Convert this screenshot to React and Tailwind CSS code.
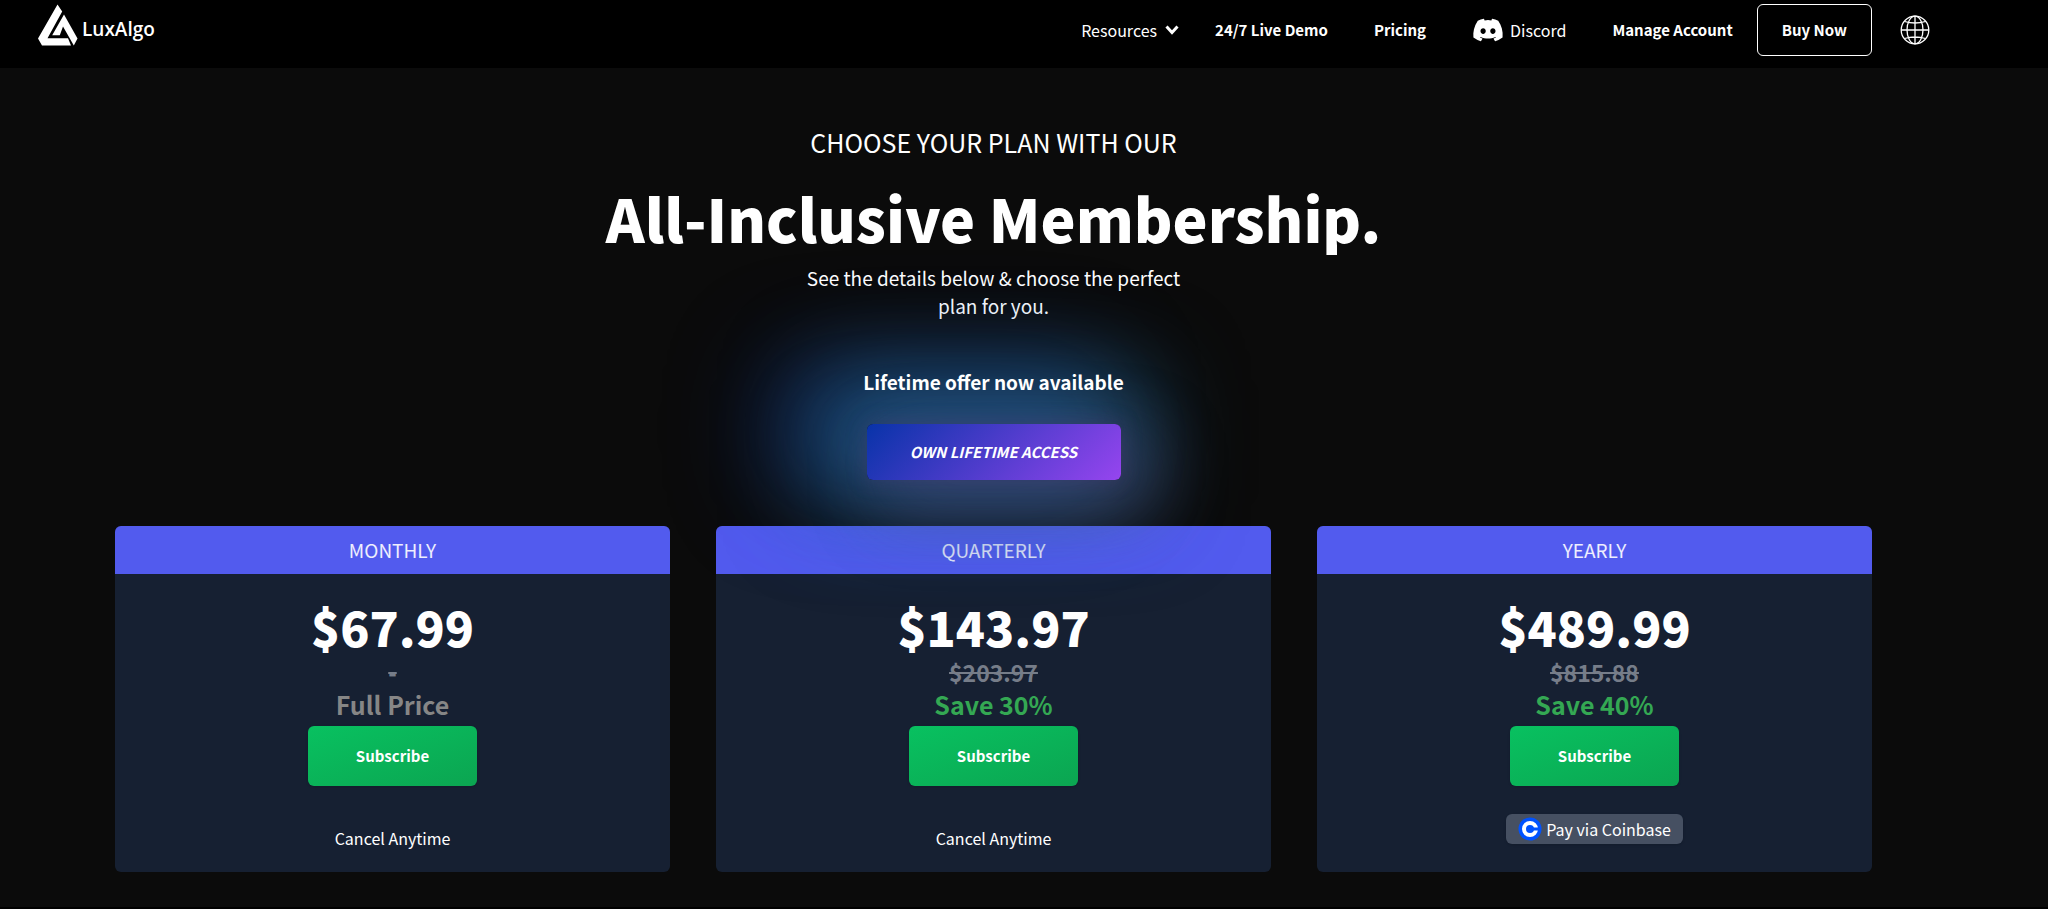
import React from 'react';
import { FaDiscord } from 'react-icons/fa';
import clsx from 'clsx';

const plans = [
    { name: 'Monthly', price: '$67.99', old: '-', note: 'Full Price', footer: 'Cancel Anytime' },
    { name: 'Quarterly', price: '$143.97', old: '$203.97', note: 'Save 30%', discount: true, footer: 'Cancel Anytime' },
    { name: 'Yearly', price: '$489.99', old: '$815.88', note: 'Save 40%', discount: true, coinbase: true },
];

const Logo = () => (
    <a href="#" className="flex items-center gap-1 text-white">
        <svg width="40" height="42" viewBox="0 0 40 42" fill="currentColor" aria-hidden="true">
            <path d="M19.500 .5 24.200 7.500 9.500 34.200H30L33 41.500H4L0 34.500Z" />
            <path d="M26 10.500 39.500 34.500 35.800 41.500 25 22.500 21.800 31.200H14.200Z" />
        </svg>
        <span className="pt-2 font-['Open_Sans',sans-serif] text-[19px] leading-7 font-semibold">LuxAlgo</span>
    </a>
);

const GlobeIcon = () => (
    <svg width="30" height="30" viewBox="0 0 30 30" fill="none" stroke="currentColor" strokeWidth="1.3" aria-hidden="true">
        <circle cx="15" cy="15" r="13.800" />
        <ellipse cx="15" cy="15" rx="8" ry="13.800" />
        <path d="M15 1v28M1 15h28M4.500 6.500q10.500 3 21 0M4.500 23.500q10.500-3 21 0" />
    </svg>
);

const CoinbaseIcon = () => (
    <svg width="24" height="24" viewBox="0 0 24 24" aria-hidden="true">
        <circle cx="12" cy="12" r="11.500" fill="#0052ff" />
        <circle cx="12" cy="12" r="6" fill="none" stroke="#fff" strokeWidth="4" />
        <path d="M15 10.500h6v3h-6z" fill="#0052ff" />
    </svg>
);

const Header = () => (
    <header className="flex h-[68px] items-start justify-between bg-black pl-[38px] pr-[118px] pt-1">
        <Logo />
        <nav className="flex items-center text-[15px] text-white">
            <button type="button" className="mr-9 flex items-center gap-2 text-base">
                Resources
                <svg width="14" height="10" viewBox="0 0 14 10" fill="none" stroke="currentColor" strokeWidth="3" aria-hidden="true">
                    <path d="M1.500 1.500 7 7.500l5.500-6" />
                </svg>
            </button>
            <div className="mr-6 flex items-center gap-[46px] font-bold">
                <a href="#demo">24/7 Live Demo</a>
                <a href="#pricing">Pricing</a>
                <a href="#discord" className="flex items-center gap-1.5 text-base font-normal">
                    <FaDiscord size={32} />
                    Discord
                </a>
                <a href="#account">Manage Account</a>
            </div>
            <a href="#buy" className="flex h-[52px] items-center rounded-md border border-white px-6 font-bold">
                Buy Now
            </a>
            <button type="button" aria-label="Language" className="ml-7">
                <GlobeIcon />
            </button>
        </nav>
    </header>
);

const PlanCard = ({ plan }) => (
    <article className="flex flex-1 flex-col items-center overflow-hidden rounded-md bg-[#162032]">
        <h2 className="w-full bg-[#525bee] text-center text-[19px] leading-[48px] text-white/90 uppercase">{plan.name}</h2>
        <p className="mt-5 text-5xl leading-[64px] font-black text-white">{plan.price}</p>
        <p className="text-[23px] leading-7 font-bold text-[#767d89] line-through">{plan.old}</p>
        <p className={clsx('text-[25px] leading-9 font-bold', plan.discount ? 'text-[#34a853]' : 'text-[#868686]')}>{plan.note}</p>
        <button
            type="button"
            className="mt-1 h-[60px] w-[169px] rounded-md bg-linear-to-br from-[#08c160] to-[#0ba551] text-[15px] font-bold text-white shadow-sm"
        >
            Subscribe
        </button>
        {plan.coinbase ? (
            <a href="#coinbase" className="mt-7 mb-7 flex h-[30px] items-center gap-1 rounded-md bg-[#465062] px-3 text-base text-white shadow">
                <CoinbaseIcon />
                Pay via Coinbase
            </a>
        ) : (
            <p className="mt-10 text-base text-white">{plan.footer}</p>
        )}
    </article>
);

const App = () => (
    <div className="min-h-screen border-b-2 border-black bg-[#0b0b0b] font-['Noto_Sans_CJK_SC',sans-serif]">
        <Header />
        <main className="flex flex-col pt-14 pr-44 pb-8 pl-[115px]">
            <section className="flex flex-col items-center text-center text-white">
                <p className="text-[25px] leading-9 uppercase">Choose your plan with our</p>
                <h1 className="mt-5 text-[59px] leading-[76px] font-black">All-Inclusive Membership.</h1>
                <p className="mt-2 max-w-[400px] text-[19px] leading-7">See the details below &amp; choose the perfect plan for you.</p>
                <p className="relative z-20 mt-12 text-[19px] leading-7 font-bold">Lifetime offer now available</p>
                <a
                    href="#lifetime"
                    className="relative z-10 mt-7 flex h-14 w-[254px] items-center justify-center rounded-md bg-linear-[135deg] from-[#0833a9] to-[#9645ef] text-[15px] font-bold uppercase italic shadow-[0_0_20px_rgba(80,50,110,0.4),24px_24px_70px_10px_rgba(100,80,140,0.35),-10px_-10px_90px_40px_rgba(45,130,175,0.55),-60px_-24px_100px_40px_rgba(16,65,190,0.35)]"
                >
                    Own lifetime access
                </a>
            </section>
            <section className="mt-[46px] flex gap-[46px]">
                {plans.map((plan) => (
                    <PlanCard key={plan.name} plan={plan} />
                ))}
            </section>
        </main>
    </div>
);

export default App;
